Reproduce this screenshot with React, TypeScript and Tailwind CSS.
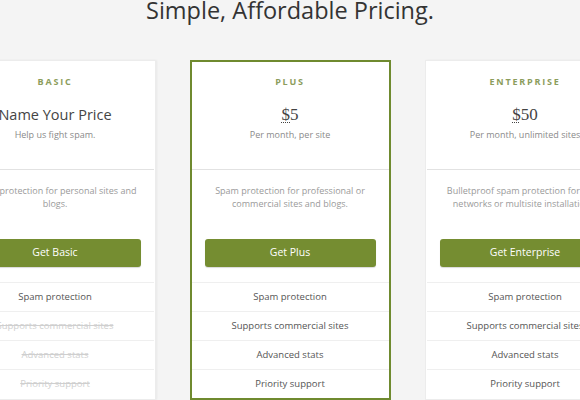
import React from "react";

type Plan = {
  name: string;
  price: string;
  dollar?: boolean;
  note: string;
  desc: string;
  cta: string;
  featured?: boolean;
  features: { label: string; on: boolean }[];
};

const FEATURES = ["Spam protection", "Supports commercial sites", "Advanced stats", "Priority support"];

const plans: Plan[] = [
  {
    name: "Basic",
    price: "Name Your Price",
    note: "Help us fight spam.",
    desc: "Spam protection for personal sites and blogs.",
    cta: "Get Basic",
    features: FEATURES.map((f, i) => ({ label: f, on: i === 0 })),
  },
  {
    name: "Plus",
    price: "5",
    dollar: true,
    note: "Per month, per site",
    desc: "Spam protection for professional or commercial sites and blogs.",
    cta: "Get Plus",
    featured: true,
    features: FEATURES.map((f) => ({ label: f, on: true })),
  },
  {
    name: "Enterprise",
    price: "50",
    dollar: true,
    note: "Per month, unlimited sites",
    desc: "Bulletproof spam protection for large networks or multisite installations.",
    cta: "Get Enterprise",
    features: FEATURES.map((f) => ({ label: f, on: true })),
  },
];

function PlanCard({ plan }: { plan: Plan }) {
  return (
    <div
      className={
        "w-[201px] shrink-0 bg-white flex flex-col text-center " +
        (plan.featured
          ? "border-2 border-[#6f8a2f]"
          : "border border-[#ececec] p-px shadow-[1px_0_2px_rgba(0,0,0,0.05)]")
      }
    >
      {/* header */}
      <div className="pt-[13px] pb-[27px]">
        <div className="text-[9px] leading-[14px] font-bold uppercase tracking-[0.2em] text-[#8c9d5c]">
          {plan.name}
        </div>
        <div className="mt-[13px] h-[26px] leading-[24px] text-[#444]">
          {plan.dollar ? (
            <span className="text-[17px] font-['Liberation_Serif',serif]">
              <span className="underline decoration-dotted underline-offset-2 decoration-1">$</span>
              {plan.price}
            </span>
          ) : (
            <span className="text-[14.5px]">{plan.price}</span>
          )}
        </div>
        <div className="text-[9px] leading-[14px] text-[#8a8a8a]">{plan.note}</div>
      </div>

      <div className="h-px bg-[#e2e2e2]" />

      {/* description */}
      <div className="px-[13px] pt-[14px] text-[9px] leading-[13px] text-[#9a9a9a] h-[68px]">
        {plan.desc}
      </div>

      <div className="px-[13px]">
        <button className="w-full h-[28px] rounded-[3px] bg-[#758d31] text-white text-[10.5px] shadow-[0_1px_1px_rgba(0,0,0,0.15)]">
          {plan.cta}
        </button>
      </div>

      <div className="mt-[15px]">
        {plan.features.map((f) => (
          <div
            key={f.label}
            className={
              "border-t border-[#efefef] h-[29px] leading-[28px] text-[9.5px] " +
              (f.on ? "text-[#555]" : "text-[#cfcfcf] line-through")
            }
          >
            {f.label}
          </div>
        ))}
      </div>
    </div>
  );
}

export default function App() {
  return (
    <div className="w-[580px] h-[400px] overflow-hidden bg-[#f4f4f4] font-['Open_Sans',sans-serif]">
      <h1 className="-mt-[6px] h-[32px] leading-[32px] text-center text-[23.5px] text-[#333]">
        Simple, Affordable Pricing.
      </h1>
      <div className="mt-[34px] flex justify-center items-start gap-[34px]">
        {plans.map((p) => (
          <PlanCard key={p.name} plan={p} />
        ))}
      </div>
    </div>
  );
}
